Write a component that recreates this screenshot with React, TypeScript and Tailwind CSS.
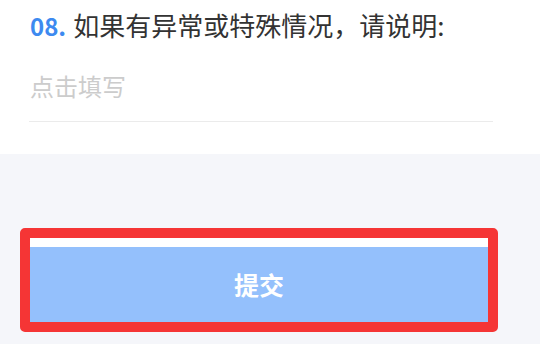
import React from "react";

export default function App() {
  return (
    <div className="w-[540px] h-[344px] bg-[#f5f6fa] overflow-hidden" style={{ fontFamily: '"Noto Sans CJK SC", "Noto Sans", sans-serif' }}>
      <div className="bg-white h-[154px] pl-[30px] pt-[12px] flex flex-col">
        <div className="text-[26px] leading-none h-[26px] text-[#333333] whitespace-nowrap flex items-baseline">
          <span className="font-bold text-[24px] text-[#3d8af0]">08.</span>
          <span className="ml-[7px]">如果有异常或特殊情况，请说明:</span>
        </div>
        <div className="mt-[36px] text-[24px] leading-none h-[24px] text-[#cccccc]">点击填写</div>
        <div className="mt-[23px] h-px w-[464px] -ml-px bg-[#ebebeb]" />
      </div>
      <div className="mt-[74px] ml-[20px] w-[478px] border-[10px] border-[#f53535] rounded-[5px] flex flex-col">
        <div className="h-[9px] bg-white" />
        <div className="h-[75px] bg-[#94c0fc] flex items-center justify-center text-white text-[25px] font-bold leading-none">
          提交
        </div>
      </div>
    </div>
  );
}
